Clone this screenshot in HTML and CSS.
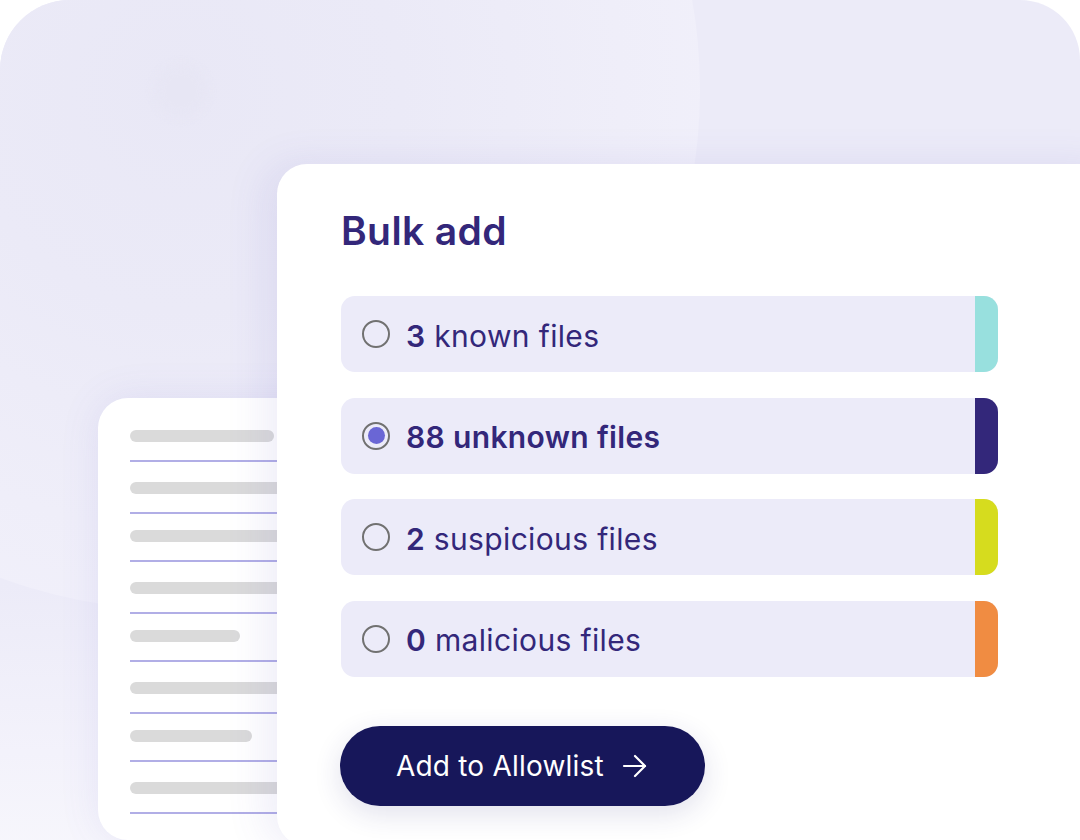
FILE: index.html
```html
<!DOCTYPE html>
<html lang="en">
<head>
<meta charset="utf-8">
<title>Bulk add</title>
<link rel="stylesheet" href="styles.css">
</head>
<body>
<div class="stage">
  <div class="backdrop">
    <div class="glow"></div>
    <div class="blob"></div>
  </div>

  <div class="doc">
    <div class="doc-row"><div class="bar w1"></div><div class="rule"></div></div>
    <div class="doc-row"><div class="bar"></div><div class="rule"></div></div>
    <div class="doc-row"><div class="bar"></div><div class="rule"></div></div>
    <div class="doc-row"><div class="bar"></div><div class="rule"></div></div>
    <div class="doc-row"><div class="bar w5"></div><div class="rule"></div></div>
    <div class="doc-row"><div class="bar"></div><div class="rule"></div></div>
    <div class="doc-row"><div class="bar w7"></div><div class="rule"></div></div>
    <div class="doc-row"><div class="bar"></div><div class="rule"></div></div>
  </div>

  <div class="card">
    <h1 class="title">Bulk add</h1>
    <div class="options">
      <label class="option">
        <span class="radio"></span>
        <span class="label"><b>3</b> known files</span>
        <span class="stripe known"></span>
      </label>
      <label class="option selected">
        <span class="radio"><span class="dot"></span></span>
        <span class="label"><b>88 unknown files</b></span>
        <span class="stripe unknown"></span>
      </label>
      <label class="option">
        <span class="radio"></span>
        <span class="label"><b>2</b> suspicious files</span>
        <span class="stripe suspicious"></span>
      </label>
      <label class="option">
        <span class="radio"></span>
        <span class="label"><b>0</b> malicious files</span>
        <span class="stripe malicious"></span>
      </label>
    </div>
    <button class="cta" type="button">
      <span>Add to Allowlist</span>
      <svg class="arrow" width="26" height="24" viewBox="0 0 26 24" fill="none" stroke="#ffffff" stroke-width="2.2" stroke-linecap="round" stroke-linejoin="round">
        <path d="M2 12 H23"/>
        <path d="M13 2 L23 12 L13 22"/>
      </svg>
    </button>
  </div>
</div>
</body>
</html>
```

FILE: styles.css
```css
* { box-sizing: border-box; }

html, body {
  margin: 0;
  padding: 0;
  background: #ffffff;
}

body {
  font-family: "Inter", "Liberation Sans", sans-serif;
  color: #33277a;
}

.stage {
  position: relative;
  width: 1080px;
  height: 840px;
  overflow: hidden;
  background: #ffffff;
}

.backdrop {
  position: absolute;
  left: 0;
  top: 0;
  width: 1080px;
  height: 940px;
  border-radius: 70px 60px 0 0;
  overflow: hidden;
  background: linear-gradient(180deg, #ecebf8 0%, #ecebf8 62%, #f3f2fb 80%, #fafafd 100%);
}

.glow {
  position: absolute;
  left: -340px;
  top: -430px;
  width: 1040px;
  height: 1040px;
  border-radius: 50%;
  background: radial-gradient(circle at center, #e9e8f6 0%, #ebeaf7 30%, #efeef9 60%, #f3f2fc 92%, #f4f3fc 100%);
}

.blob {
  position: absolute;
  left: 155px;
  top: 65px;
  width: 52px;
  height: 52px;
  border-radius: 50%;
  background: #e7e6f4;
  filter: blur(5px);
}

.doc {
  position: absolute;
  left: 98px;
  top: 398px;
  width: 260px;
  height: 442px;
  background: #ffffff;
  border-radius: 30px;
  padding: 32px 0 0 32px;
  box-shadow: 0 0 40px rgba(100, 90, 200, 0.10);
}

.doc-row {
  display: flex;
  flex-direction: column;
  margin-bottom: 20.5px;
}

.doc-row:nth-child(even) {
  margin-bottom: 16.5px;
}

.bar {
  width: 190px;
  height: 12px;
  border-radius: 6px;
  background: #dadada;
}

.bar.w1 { width: 144px; }
.bar.w5 { width: 110px; }
.bar.w7 { width: 122px; }

.rule {
  margin-top: 18px;
  width: 200px;
  height: 1.5px;
  background: #b1aee6;
}

.card {
  position: absolute;
  left: 277px;
  top: 164px;
  width: 850px;
  height: 682px;
  background: #ffffff;
  border-radius: 30px;
  padding: 44px 0 0 64px;
  box-shadow: -12px 0 40px rgba(90, 80, 190, 0.10);
}

.title {
  margin: 0;
  font-size: 39px;
  line-height: 46px;
  font-weight: 600;
  letter-spacing: 0.4px;
  color: #33277a;
}

.options {
  margin-top: 42px;
  width: 657px;
  display: flex;
  flex-direction: column;
  gap: 25.5px;
}

.option {
  display: flex;
  align-items: center;
  height: 76px;
  padding-left: 21px;
  background: #ecebf9;
  border-radius: 14px;
  overflow: hidden;
}

.radio {
  flex: none;
  width: 28px;
  height: 28px;
  border-radius: 50%;
  border: 2px solid #717171;
  display: flex;
  align-items: center;
  justify-content: center;
}

.dot {
  width: 17px;
  height: 17px;
  border-radius: 50%;
  background: #6a66d5;
}

.label {
  margin-left: 16px;
  flex: 1;
  font-size: 30px;
  font-weight: 400;
  letter-spacing: 0.35px;
  color: #33277a;
  white-space: nowrap;
  padding-top: 3px;
}

.label b {
  font-weight: 600;
  letter-spacing: 0.35px;
}

.stripe {
  flex: none;
  align-self: stretch;
  width: 23px;
}

.stripe.known { background: #98e0de; }
.stripe.unknown { background: #33277a; }
.stripe.suspicious { background: #d6dc1e; }
.stripe.malicious { background: #f08c42; }

.cta {
  margin-top: 49.5px;
  margin-left: -1px;
  width: 365px;
  height: 80px;
  border: none;
  border-radius: 40px;
  background: #17175a;
  color: #ffffff;
  font-family: inherit;
  font-size: 28px;
  font-weight: 400;
  letter-spacing: 0.2px;
  display: flex;
  align-items: center;
  padding: 0 0 0 56px;
  gap: 18px;
  box-shadow: 0 8px 28px rgba(40, 40, 120, 0.14);
  cursor: pointer;
}

.arrow {
  flex: none;
}
```
